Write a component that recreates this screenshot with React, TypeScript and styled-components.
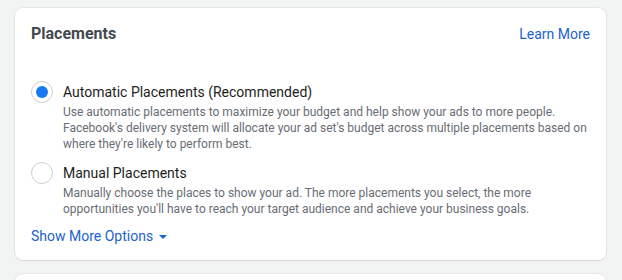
import React from "react";
import styled, { createGlobalStyle } from "styled-components";

const Global = createGlobalStyle`
  html, body { margin: 0; padding: 0; background: #f2f3f3; }
  body { font-family: Roboto, "Liberation Sans", Arial, sans-serif; -webkit-font-smoothing: antialiased; }
`;

const Page = styled.div`
  display: flex;
  flex-direction: column;
  gap: 14px;
  padding: 8px 16px 0 15px;
  width: 591px;
`;

const Card = styled.section`
  background: #fff;
  border-radius: 8px;
  box-shadow: 0 0 0 1px rgba(0, 0, 0, 0.05), 0 1px 2px rgba(0, 0, 0, 0.06);
  padding: 16px 16px 14px 16px;
  display: flex;
  flex-direction: column;
`;

const NextCard = styled(Card)`
  height: 40px;
  padding: 0;
`;

const Header = styled.div`
  display: flex;
  align-items: center;
  justify-content: space-between;
  height: 20px;
  margin-bottom: 38px;
`;

const Title = styled.h2`
  margin: 0;
  font-size: 16px;
  font-weight: 700;
  color: #444950;
  line-height: 20px;
`;

const Link = styled.a`
  font-size: 14px;
  color: #1b62d0;
  text-decoration: none;
  line-height: 20px;
  display: inline-flex;
  align-items: center;
  gap: 6px;
`;

const Option = styled.div<{ $gap?: number }>`
  display: grid;
  grid-template-columns: 22px 1fr;
  column-gap: 10px;
  margin-bottom: ${(p) => p.$gap ?? 0}px;
`;

const Radio = styled.span<{ $checked?: boolean }>`
  width: 22px;
  height: 22px;
  box-sizing: border-box;
  border-radius: 50%;
  border: 1px solid #ccd0d5;
  background: #fff;
  display: flex;
  align-items: center;
  justify-content: center;
  margin-top: -1px;
  &::after {
    content: "";
    width: 12px;
    height: 12px;
    border-radius: 50%;
    background: ${(p) => (p.$checked ? "#1877f2" : "transparent")};
  }
`;

const OptionBody = styled.div`
  display: flex;
  flex-direction: column;
  gap: 2px;
`;

const OptionTitle = styled.div`
  font-size: 14px;
  line-height: 20px;
  color: #1c1e21;
`;

const OptionDesc = styled.div`
  font-size: 12px;
  line-height: 16px;
  color: #686d75;
`;

const Caret = styled.span`
  width: 0;
  height: 0;
  border-left: 4px solid transparent;
  border-right: 4px solid transparent;
  border-top: 4px solid #1b62d0;
  margin-top: 2px;
`;

export default function App() {
  return (
    <>
      <Global />
      <Page>
        <Card>
          <Header>
            <Title>Placements</Title>
            <Link href="#">Learn More</Link>
          </Header>
          <Option $gap={11}>
            <Radio $checked />
            <OptionBody>
              <OptionTitle>Automatic Placements (Recommended)</OptionTitle>
              <OptionDesc>
                Use automatic placements to maximize your budget and help show your ads to more people.
                Facebook's delivery system will allocate your ad set's budget across multiple placements based on
                where they're likely to perform best.
              </OptionDesc>
            </OptionBody>
          </Option>
          <Option $gap={9}>
            <Radio />
            <OptionBody>
              <OptionTitle>Manual Placements</OptionTitle>
              <OptionDesc>
                Manually choose the places to show your ad. The more placements you select, the more
                opportunities you'll have to reach your target audience and achieve your business goals.
              </OptionDesc>
            </OptionBody>
          </Option>
          <div>
            <Link href="#">
              Show More Options <Caret />
            </Link>
          </div>
        </Card>
        <NextCard />
      </Page>
    </>
  );
}
